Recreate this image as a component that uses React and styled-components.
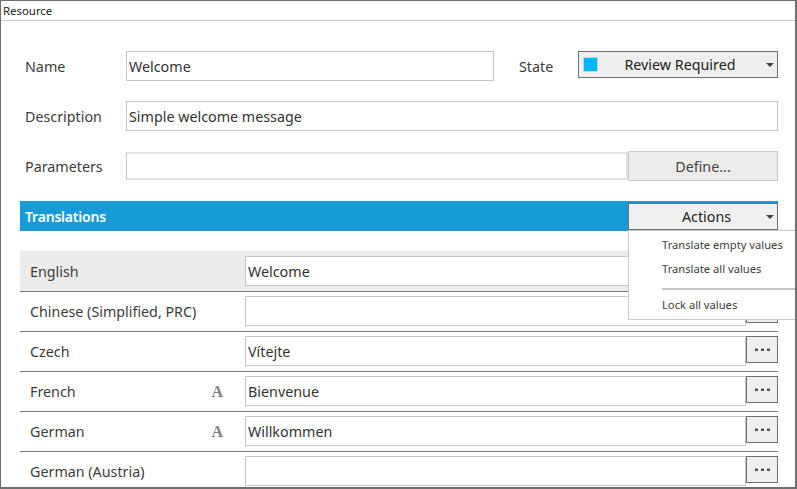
import React from "react";
import styled, { createGlobalStyle } from "styled-components";

const Global = createGlobalStyle`
  html, body { margin: 0; padding: 0; background: #fff; }
  body { font-family: "Noto Sans", "Open Sans", sans-serif; color: #3d3d3d; }
  #root { width: 797px; height: 489px; overflow: hidden; }
  * { box-sizing: border-box; }
`;

const Window = styled.div`
  width: 797px; height: 489px; border-style: solid; border-color: #6e6e6e; border-width: 1px 2px 2px 1px;
  overflow: hidden; background: #fff;
`;
const TitleBar = styled.div`
  height: 20px; border-bottom: 1px solid #c8c8c8; padding-left: 2px;
  font-size: 11.4px; line-height: 20px; color: #222;
`;
const Content = styled.div`
  padding: 30px 17px 0 19px;
`;
const FormRow = styled.div`
  display: flex; align-items: flex-start; height: 50px;
`;
const Label = styled.div`
  width: 106px; padding-left: 5px; font-size: 14.3px; line-height: 32px; color: #3d3d3d;
`;
const Input = styled.div`
  width: ${p => p.$w ? p.$w + "px" : "auto"}; flex: ${p => p.$w ? "none" : 1};
  height: 30px; border: 1px solid #c6c6c6; padding-left: 2px;
  font-size: 14.3px; line-height: 30px; color: #333; background: #fff; white-space: nowrap; overflow: hidden;
`;
const ParamInput = styled(Input)`
  height: 28px; margin-top: 1px; border-width: 2px 2px 2px 1px; border-color: #e2e2e2; border-left-color: #c6c6c6;
`;
const StateLabel = styled.div`
  width: 59px; margin-left: 25px; font-size: 14.3px; line-height: 32px; color: #3d3d3d;
`;
const Combo = styled.div`
  display: flex; align-items: center; width: 200px; height: 27px; border: 1px solid #6e6e6e; background: #efefef; color: #222;
  font-size: 14.3px; position: relative;
`;
const Swatch = styled.span`
  width: 15px; height: 15px; margin-left: 4px; background: #00b7ff; border: 1px solid #b4dcef; flex: none;
`;
const ComboText = styled.span`
  flex: 1; text-align: center; padding: 0 ${p => p.$pr}px 0 ${p => p.$pl}px; line-height: 25px;
`;
const Caret = styled.span`
  position: absolute; right: 3px; top: 11px; width: 0; height: 0;
  border-left: 4px solid transparent; border-right: 4px solid transparent; border-top: 4px solid #444;
`;
const DefineButton = styled.div`
  width: 150px; height: 30px; border: 1px solid #c8c8c8; background: #ececec; text-align: center;
  font-size: 14.3px; line-height: 30px; color: #444;
`;
const Bar = styled.div`
  display: flex; justify-content: space-between; height: 30px; background: #169bd7; margin-bottom: 20px; position: relative;
`;
const BarTitle = styled.div`
  padding-left: 5px; color: #fff; font-size: 14px; font-weight: 600; line-height: 31px; letter-spacing: -0.2px;
`;
const ActionsButton = styled(Combo)`
  width: 150px; margin-top: 2px; background: #f0f0f0;
`;
const Menu = styled.div`
  position: absolute; left: 608px; top: 29px; width: 175px; height: 90px; background: #fff; z-index: 2;
  border: 1px solid #c8c8c8; border-right: none; padding: 2px 0 0 33px; font-size: 11.2px; color: #3d3d3d;
`;
const MenuItem = styled.div`
  height: 24px; line-height: 24px; white-space: nowrap;
`;
const MenuSeparator = styled.div`
  height: 2px; background: #c8c8c8; margin: 7px 0 3px;
`;
const Row = styled.div`
  display: grid; grid-template-columns: 225px 501px 32px; height: 40px; padding-top: 4px;
  border-top: 1px solid #7a7a7a;
`;
const FirstRow = styled(Row)`
  border-top: none; padding-top: 5px; background: #ebebeb;
`;
const Lang = styled.div`
  display: flex; justify-content: space-between; padding: 0 22px 0 10px; font-size: 14.3px; line-height: 32px; color: #3d3d3d;
`;
const Glyph = styled.span`
  font-family: "Liberation Serif", serif; font-weight: 700; font-size: 16px; color: #808080; line-height: 32px;
`;
const Ellipsis = styled.div`
  display: flex; gap: 3px; align-items: center; justify-content: center; height: 27px;
  border: 1px solid #6e6e6e; background: #efefef;
`;
const Dot = styled.span`width: 3px; height: 2px; background: #505050; box-shadow: 0 -1px 0 #a8a8a8;`;

const rows = [
  ["Chinese (Simplified, PRC)", "", false],
  ["Czech", "Vítejte", false],
  ["French", "Bienvenue", true],
  ["German", "Willkommen", true],
  ["German (Austria)", "", false],
];

const More = () => <Ellipsis><Dot /><Dot /><Dot /></Ellipsis>;

export default function App() {
  return (
    <>
      <Global />
      <Window>
        <TitleBar>Resource</TitleBar>
        <Content>
          <FormRow>
            <Label>Name</Label>
            <Input $w={368}>Welcome</Input>
            <StateLabel>State</StateLabel>
            <Combo><Swatch /><ComboText $pr={15} $pl={0}>Review Required</ComboText><Caret /></Combo>
          </FormRow>
          <FormRow>
            <Label>Description</Label>
            <Input>Simple welcome message</Input>
          </FormRow>
          <FormRow>
            <Label>Parameters</Label>
            <ParamInput />
            <DefineButton>Define...</DefineButton>
          </FormRow>
          <Bar>
            <BarTitle>Translations</BarTitle>
            <ActionsButton><ComboText $pr={0} $pl={7}>Actions</ComboText><Caret /></ActionsButton>
            <Menu>
              <MenuItem>Translate empty values</MenuItem>
              <MenuItem>Translate all values</MenuItem>
              <MenuSeparator />
              <MenuItem>Lock all values</MenuItem>
            </Menu>
          </Bar>
          <FirstRow>
            <Lang>English</Lang>
            <Input>Welcome</Input>
            <More />
          </FirstRow>
          {rows.map(([lang, val, glyph]) => (
            <Row key={lang}>
              <Lang>{lang}{glyph && <Glyph>A</Glyph>}</Lang>
              <Input>{val}</Input>
              <More />
            </Row>
          ))}
        </Content>
      </Window>
    </>
  );
}
